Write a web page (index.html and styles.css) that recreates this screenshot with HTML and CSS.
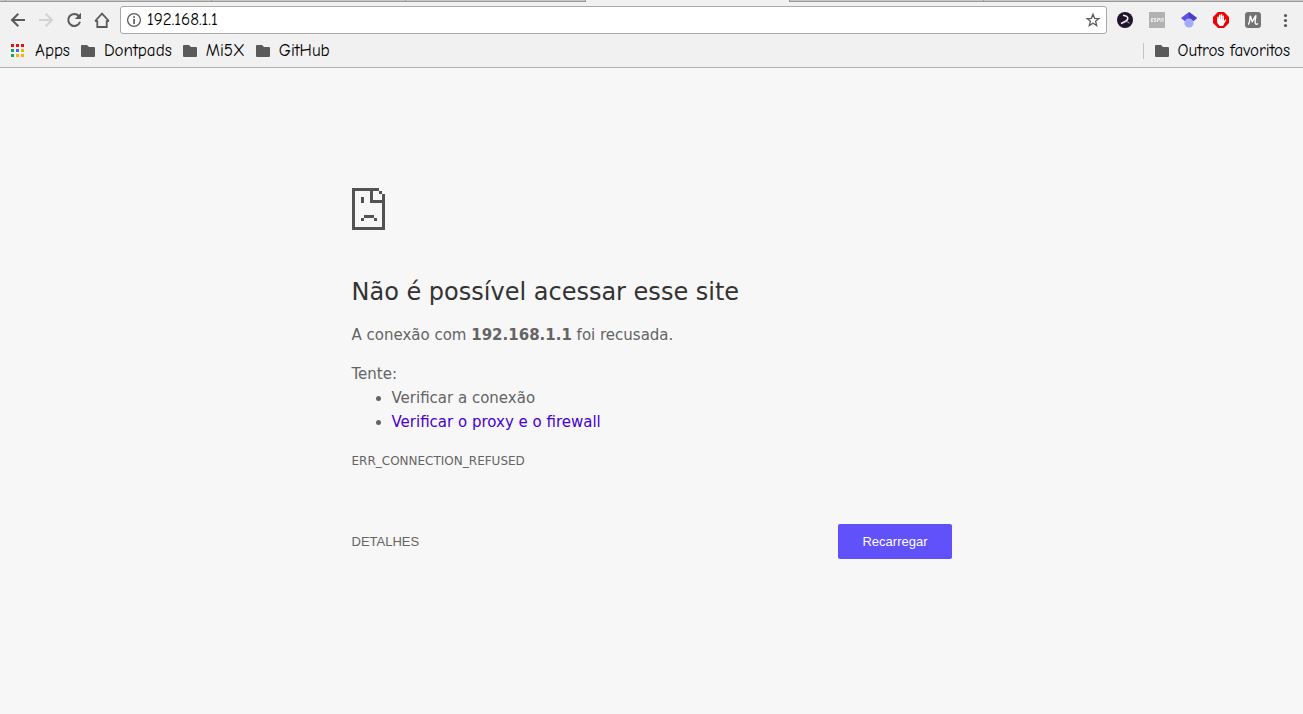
FILE: index.html
```html
<!DOCTYPE html>
<html lang="pt-BR">
<head>
<meta charset="utf-8">
<title>192.168.1.1</title>
<link rel="stylesheet" href="styles.css">
</head>
<body>
<header class="chrome">
  <div class="tabs">
    <span class="tab tab-edge"></span><span class="tab tab-wide"></span><span class="tab"></span><span class="tab tab-last"></span><span class="tab-active"></span><span class="tab"></span><span class="tab tab-fill"></span>
  </div>
  <div class="toolbar">
    <nav class="nav">
      <button class="icon-button" aria-label="Voltar"><svg width="16" height="16" viewBox="0 0 16 16" fill="none" stroke="#5a5a5a" stroke-width="2"><path d="M15 8H2.500M8.300 1.700L2 8l6.300 6.300"/></svg></button>
      <button class="icon-button" aria-label="Avançar" disabled><svg width="16" height="16" viewBox="0 0 16 16" fill="none" stroke="#d2d2d2" stroke-width="2"><path d="M1 8h12.500M7.700 1.700L14 8l-6.300 6.300"/></svg></button>
      <button class="icon-button" aria-label="Recarregar página"><svg width="16" height="16" viewBox="0 0 16 16"><path d="M12.800 4A6 6 0 1 0 14 9.800" fill="none" stroke="#5a5a5a" stroke-width="2"/><path d="M15 .8V7H8.800z" fill="#5a5a5a"/></svg></button>
      <button class="icon-button" aria-label="Página inicial"><svg width="16" height="16" viewBox="0 0 16 16" fill="none" stroke="#5a5a5a" stroke-width="1.800"><path d="M3.300 8.500V15h9.400V8.500M1 9h2.500M12.500 9H15M1.200 9L8 1.600 14.800 9"/></svg></button>
    </nav>
    <div class="omnibox">
      <svg width="16" height="16" viewBox="0 0 16 16"><circle cx="8" cy="8" r="6.400" fill="none" stroke="#5a5a5a" stroke-width="1.300"/><path d="M7.200 4.200h1.700v1.700H7.200zM7.200 7h1.700v5H7.200z" fill="#5a5a5a"/></svg>
      <input class="address" type="text" aria-label="Endereço" value="192.168.1.1">
      <button class="icon-button star" aria-label="Favoritar"><svg width="16" height="16" viewBox="0 0 16 16"><path d="M8 2.300l1.600 4 4.300.3-3.300 2.700 1.100 4.200L8 11.200l-3.700 2.300 1.100-4.200L2.100 6.600l4.300-.3z" fill="none" stroke="#5a5a5a" stroke-width="1.300"/></svg></button>
    </div>
    <div class="extensions">
      <button class="icon-button" aria-label="Extensão"><svg width="16" height="16" viewBox="0 0 16 16"><circle cx="8" cy="8" r="8" fill="#21142b"/><path d="M6 3.200c3 .3 5.200 1.800 4.700 3.800-.4 1.800-3.200 3.100-6.700 4.400" fill="none" stroke="#eee" stroke-width="1.600"/><path d="M8.500 9.300c1.700.3 3 .9 4 1.900" fill="none" stroke="#bbb"/></svg></button>
      <button class="icon-button" aria-label="ESPN"><svg width="16" height="16" viewBox="0 0 16 16"><path d="M0 0h16v16H0z" fill="#b1b1b1"/><path d="M4.500 6.500h-2l-.5 3h2M2.300 8h2M7.500 6.500h-2l-.2 1.500h1.700l-.2 1.500h-2M8.300 10l.5-3.500h2L10.500 8h-2M11.800 10l.5-3.500h2L13.800 10" fill="none" stroke="#eee"/></svg></button>
      <button class="icon-button" aria-label="Acadêmico"><svg width="16" height="16" viewBox="0 0 16 16"><path d="M8 0l8 6-3.500 3H3.500L0 6z" fill="#5c50ef"/><path d="M8 0l8 6-3.500 3L8 6z" fill="#4a3fc0"/><circle cx="8" cy="11" r="4.600" fill="#a3acfa"/></svg></button>
      <button class="icon-button" aria-label="Bloqueador"><svg width="16" height="16" viewBox="0 0 16 16"><path d="M5 0h6l5 5v6l-5 5H5l-5-5V5z" fill="#f00000"/><path d="M5 9V5.200M6.700 8V3.200M8.500 8V2.800M10.200 8V4.200" stroke="#fff" stroke-width="1.500" stroke-linecap="round"/><path d="M4.300 7h6.700v2l1.300-1.700 1 .6-2.300 4.100-1 2H6.500l-2.200-3z" fill="#fff"/></svg></button>
      <button class="icon-button" aria-label="Mendeley"><svg width="16" height="16" viewBox="0 0 16 16"><rect width="16" height="16" rx="3" fill="#747474"/><path d="M3 12.300c1.500 0 1.500-3.500 2.300-8.500.7 2 1.200 4 1.900 5.800C8.500 8 9.500 5.500 11 3.500c-.5 3-1.400 6-.7 8 .4 1 1.500.9 2.700 0" fill="none" stroke="#fff" stroke-width="1.400"/></svg></button>
      <button class="icon-button" aria-label="Menu"><svg width="16" height="16" viewBox="0 0 16 16" fill="#5a5a5a"><circle cx="8.500" cy="3.500" r="1.600"/><circle cx="8.500" cy="8.500" r="1.600"/><circle cx="8.500" cy="13.500" r="1.600"/></svg></button>
    </div>
  </div>
  <nav class="bookmarks">
    <a class="bookmark" href="#"><svg class="apps" width="14" height="14" viewBox="0 0 14 14"><path d="M0 0h3v3H0zM5 0h3v3H5zM10 0h3v3h-3z" fill="#e80f0f"/><path d="M0 5h3v3H0zM0 10h3v3H0z" fill="#10a560"/><path d="M5 5h3v3H5z" fill="#4a63f0"/><path d="M10 5h3v3h-3zM5 10h3v3H5zM10 10h3v3h-3z" fill="#f5b400"/></svg>Apps</a>
    <a class="bookmark" href="#"><svg width="14" height="12" viewBox="0 0 14 12"><path d="M1 0h5l2 2h5q1 0 1 1v8q0 1-1 1H1q-1 0-1-1V1q0-1 1-1z" fill="#5a5a5a"/></svg>Dontpads</a>
    <a class="bookmark" href="#"><svg width="14" height="12" viewBox="0 0 14 12"><path d="M1 0h5l2 2h5q1 0 1 1v8q0 1-1 1H1q-1 0-1-1V1q0-1 1-1z" fill="#5a5a5a"/></svg>Mi5X</a>
    <a class="bookmark" href="#"><svg width="14" height="12" viewBox="0 0 14 12"><path d="M1 0h5l2 2h5q1 0 1 1v8q0 1-1 1H1q-1 0-1-1V1q0-1 1-1z" fill="#5a5a5a"/></svg>GitHub</a>
    <a class="bookmark bookmark-other" href="#"><svg width="14" height="12" viewBox="0 0 14 12"><path d="M1 0h5l2 2h5q1 0 1 1v8q0 1-1 1H1q-1 0-1-1V1q0-1 1-1z" fill="#5a5a5a"/></svg>Outros favoritos</a>
  </nav>
</header>
<main class="error">
  <svg class="sad-page" width="33" height="42" viewBox="0 0 33 42" shape-rendering="crispEdges" fill="#535353"><path d="M0 0h27v3H0zM0 0h3v42H0zM0 39h33v3H0zM30 6h3v36h-3zM27 3h3v3h-3zM18 0h3v15h-3zM18 12h15v3H18zM9 9h3v6H9zM12 27h10v3H12zM9 30h3v3H9zM22 30h3v3h-3z"/></svg>
  <h1 class="title">Não é possível acessar esse site</h1>
  <p class="text">A conexão com <strong>192.168.1.1</strong> foi recusada.</p>
  <div class="suggestions">
    <p class="lead">Tente:</p>
    <ul class="list">
      <li>Verificar a conexão</li>
      <li><a class="link" href="#">Verificar o proxy e o firewall</a></li>
    </ul>
  </div>
  <p class="code">ERR_CONNECTION_REFUSED</p>
  <div class="actions">
    <button class="details">DETALHES</button>
    <button class="reload">Recarregar</button>
  </div>
</main>
</body>
</html>
```
FILE: styles.css
```css
* { box-sizing: border-box; }
body {
  margin: 0;
  background: #f7f7f7;
  color: #646464;
  font: 15px/24px "DejaVu Sans", sans-serif;
}
button { border: 0; background: none; padding: 0; font: inherit; color: inherit; }
svg { display: block; flex: none; }
.chrome {
  background: #f1f1f1;
  border-bottom: 1px solid #b0b0b0;
  color: #000;
  font: 17px/24px "Comic Neue", "Noto Sans", sans-serif;
}
.tabs { display: flex; height: 2px; }
.tab {
  width: 194px;
  background: #c9c9c9;
  border-bottom: 1px solid #999;
  border-right: 1px solid #999;
}
.tab-edge { width: 6px; }
.tab-wide { width: 206px; }
.tab-last { width: 180px; }
.tab-active { width: 204px; border-right: 1px solid #999; }
.tab-fill { flex: 1; border-right: 0; }
.toolbar { display: flex; align-items: center; height: 36px; padding: 0 10px; }
.nav { display: flex; gap: 12px; padding-right: 10px; }
.icon-button { display: grid; place-items: center; width: 16px; height: 16px; }
.omnibox {
  display: flex;
  flex: 1;
  align-items: center;
  height: 28px;
  padding: 0 5px;
  background: #fff;
  border: 1px solid #a9a9a9;
  border-radius: 3px;
}
.address {
  flex: 1;
  min-width: 0;
  border: 0;
  padding: 0 5px;
  background: none;
  font: 17px/20px "Comic Neue", "Noto Sans", sans-serif;
  color: #000;
}
.extensions { display: flex; gap: 16px; padding-left: 10px; }
.bookmarks { display: flex; align-items: center; gap: 11px; height: 29px; padding: 0 13px 4px 11px; }
.bookmark { display: flex; align-items: center; gap: 9px; color: #000; text-decoration: none; white-space: nowrap; }
.apps { margin-right: 1px; }
.bookmark-other { margin-left: auto; padding-left: 11px; line-height: 16px; border-left: 1px solid #c4c4c4; }
.error { max-width: 600px; margin: 0 auto; padding-top: 120px; }
.title { margin: 48px 0 17px; font-size: 24px; font-weight: 400; line-height: 28px; color: #333; }
.text, .suggestions, .code { margin: 0 0 15px; }
.lead { margin: 0; }
.list { margin: 0; padding-left: 40px; }
.link { color: #4700d0; text-decoration: none; }
.code { font-size: 12px; }
.actions { display: flex; align-items: center; justify-content: space-between; margin-top: 51px; font: 13px/15px "Liberation Sans", Arial, sans-serif; }
.reload { padding: 10px 24px; border-radius: 2px; background: #6051fa; color: #fff; }
```
